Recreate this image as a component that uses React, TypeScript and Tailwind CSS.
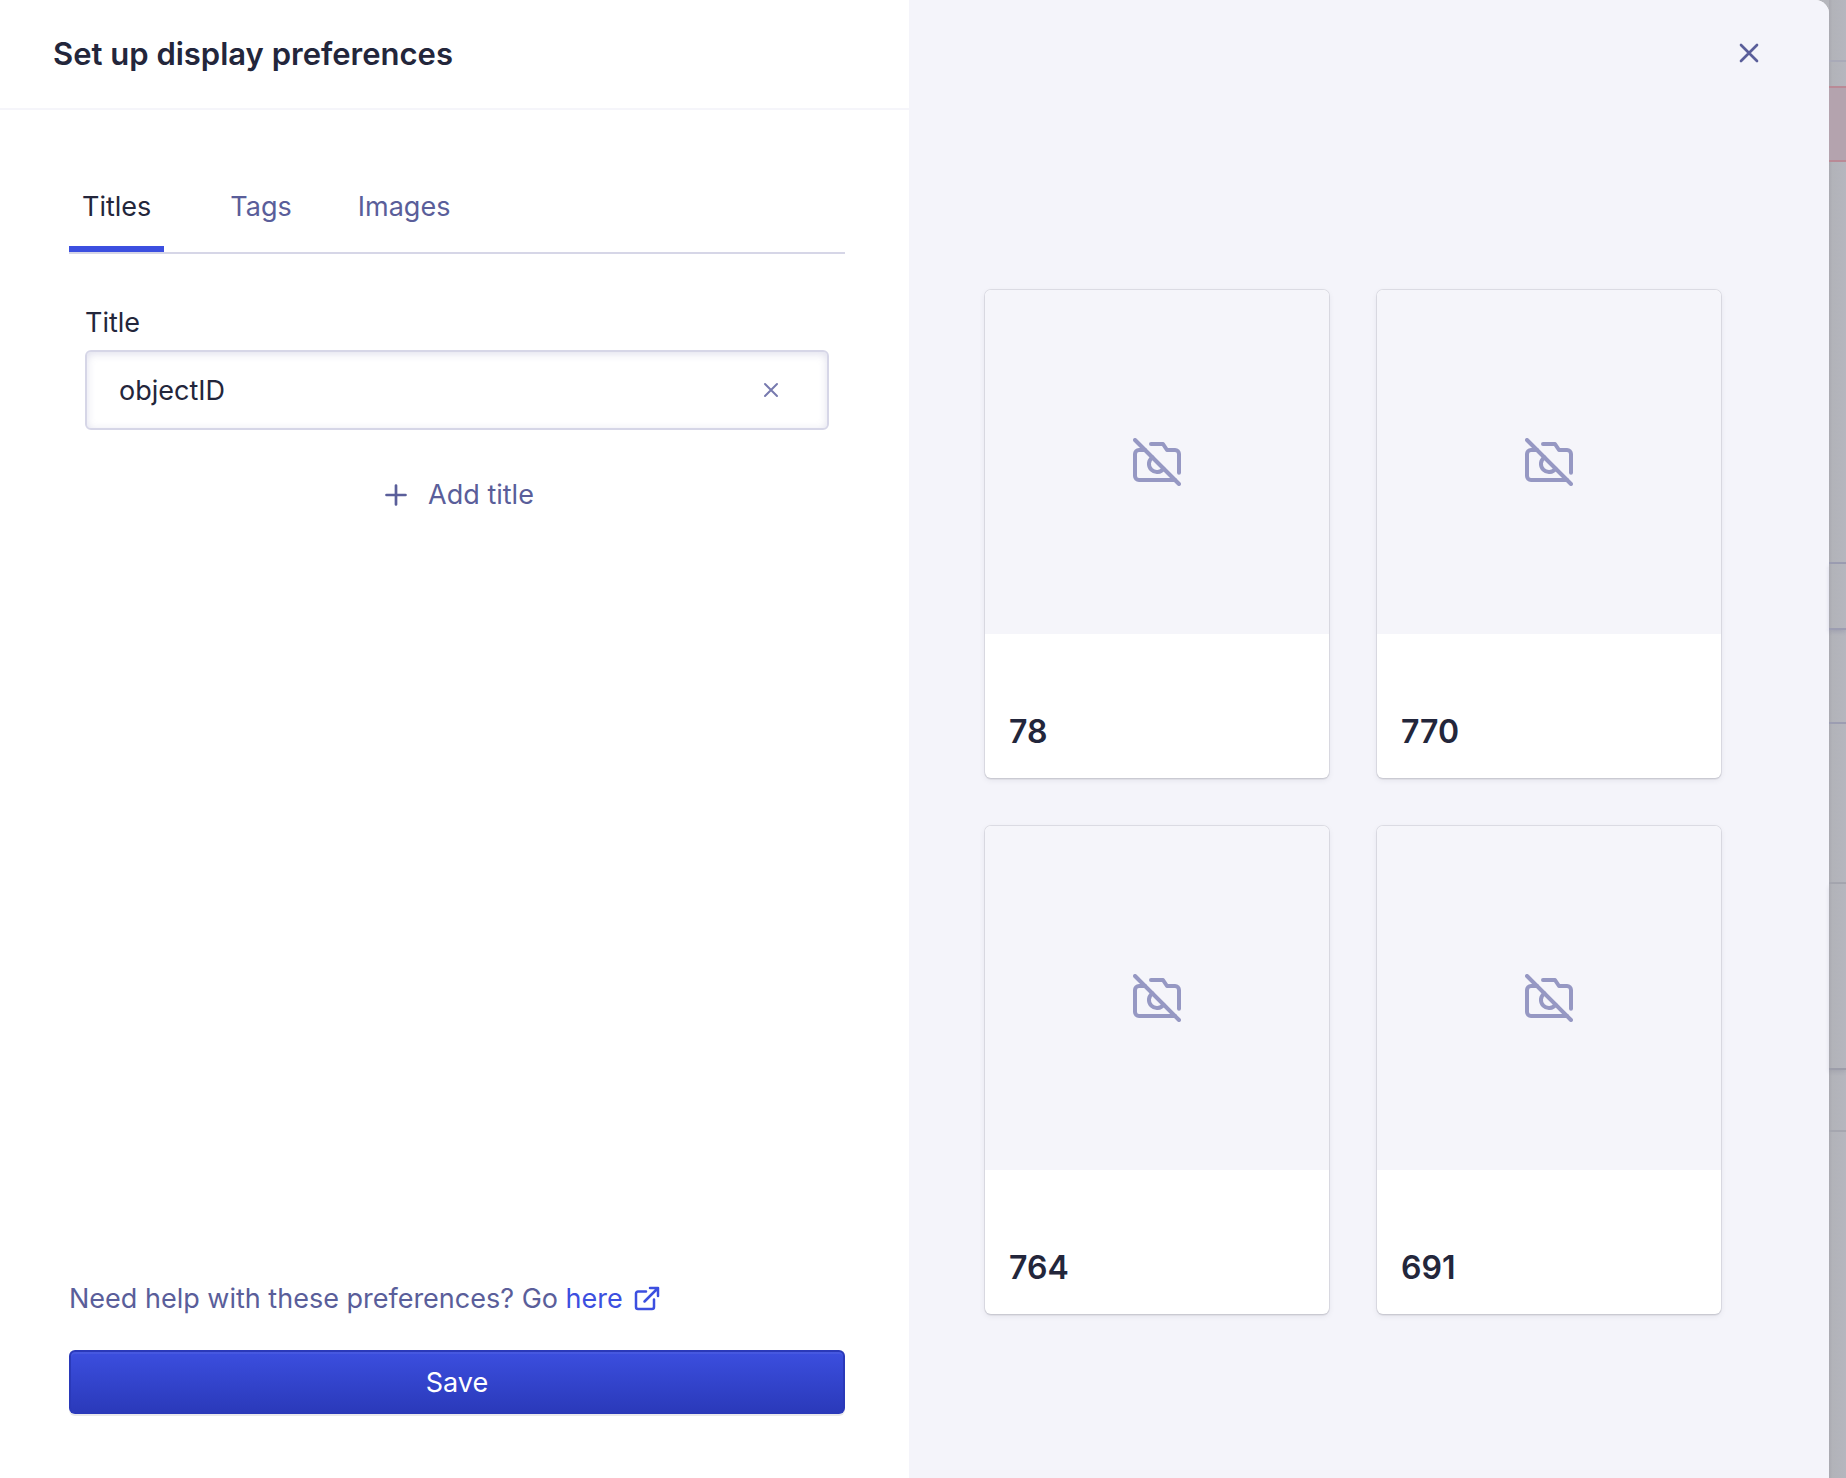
import { useState } from "react";

const RECORDS = ["78", "770", "764", "691"];
const TABS = ["Titles", "Tags", "Images"];

function CameraOff() {
  return (
    <svg className="size-12" viewBox="0 0 24 24" fill="none" stroke="currentColor" strokeWidth="2" strokeLinecap="round" strokeLinejoin="round" aria-hidden="true">
      <line x1="1" y1="1" x2="23" y2="23" />
      <path d="M21 21H3a2 2 0 0 1-2-2V8a2 2 0 0 1 2-2h3m3-3h6l2 3h4a2 2 0 0 1 2 2v9.34m-7.72-2.06a4 4 0 1 1-5.56-5.56" />
    </svg>
  );
}

function Cross({ className }: { className: string }) {
  return (
    <svg className={className} viewBox="0 0 24 24" fill="none" stroke="currentColor" strokeWidth="2" strokeLinecap="round" aria-hidden="true">
      <path d="M18 6 6 18M6 6l12 12" />
    </svg>
  );
}

function Plus() {
  return (
    <svg className="size-8" viewBox="0 0 32 32" fill="none" stroke="currentColor" strokeWidth="2.7" strokeLinecap="round" aria-hidden="true">
      <path d="M16 6.5v19M6.5 16h19" />
    </svg>
  );
}

function ExternalLink() {
  return (
    <svg className="size-7" viewBox="0 0 28 28" fill="none" stroke="currentColor" strokeWidth="2.5" strokeLinecap="round" strokeLinejoin="round" aria-hidden="true">
      <path d="M21 14.5V22a2 2 0 0 1-2 2H5a2 2 0 0 1-2-2V8.5a2 2 0 0 1 2-2h8M17 3h8v8M11.5 16.5 25 3" />
    </svg>
  );
}

function RecordCard({ title }: { title: string }) {
  return (
    <article className="overflow-hidden rounded-md bg-white shadow-[0_0_0_1px_rgba(35,38,59,0.1),0_2px_1px_rgba(35,38,59,0.06),0_2px_6px_rgba(35,38,59,0.08)]">
      <div className="flex aspect-square items-center justify-center bg-[#f5f5fa] text-[#9698c3]">
        <CameraOff />
      </div>
      <h2 className="px-6 pt-[78px] pb-[26px] text-[32px] leading-10 font-semibold">{title}</h2>
    </article>
  );
}

function PageBehind() {
  return (
    <div className="flex w-[17px] shrink-0 flex-col bg-linear-to-r from-[#a9a9b0] via-[#b2b3b9] via-20% to-[#b5b6be]" aria-hidden="true">
      <div className="h-[62px] border-b-2 border-[#a9aab8]" />
      <div className="h-6" />
      <div className="h-[76px] border-y-2 border-[#b98a96] bg-[#b4a3ae]" />
      <div className="h-[402px] border-b-2 border-[#9c9db1]" />
      <div className="h-[66px] border-b-2 border-[#9c9db1] shadow-[0_2px_4px_rgba(60,60,120,0.15)]" />
      <div className="h-[94px] border-b-2 border-[#9c9db1]" />
      <div className="h-40 border-b-2 border-[#a5a6af]" />
      <div className="h-[186px] border-b-2 border-[#9c9da9] shadow-[0_2px_4px_rgba(60,60,90,0.12)]" />
      <div className="h-[62px] border-b-2 border-[#a5a6af]" />
    </div>
  );
}

export default function App() {
  const [tab, setTab] = useState("Titles");
  const [title, setTitle] = useState("objectID");

  return (
    <div className="flex min-h-screen bg-[#b5b6bc] font-[Inter,sans-serif] text-[27px] leading-9 text-[#23263b]">
      <main className="grid min-w-0 flex-1 grid-cols-[909fr_920fr] overflow-hidden rounded-tr-[14px] bg-white">
        <section className="flex flex-col">
          <header className="border-b-2 border-[#f5f5fa] px-[53px] py-[34px]">
            <h1 className="text-[31px] leading-10 font-semibold">Set up display preferences</h1>
          </header>

          <div className="flex flex-1 flex-col px-16 pt-[68px] pb-16 pl-[69px]">
            <div role="tablist" className="flex border-b-2 border-[#d6d6e7]">
              {TABS.map((name) => (
                <button
                  key={name}
                  type="button"
                  role="tab"
                  aria-selected={tab === name}
                  onClick={() => setTab(name)}
                  className="mr-10 border-b-[6px] border-transparent px-[13px] pt-[11px] pb-[21px] text-[#5a5e9a] first:mr-[53px] aria-selected:border-[#3c4fe0] aria-selected:text-[#23263b]"
                >
                  {name}
                </button>
              ))}
            </div>

            <div className="flex flex-col px-4 pt-[51px]">
              <label htmlFor="title-field">Title</label>
              <div className="mt-[9px] flex h-20 items-center rounded-md border-2 border-[#d6d6e7] bg-white pr-[44px] pl-8 shadow-[inset_0_2px_8px_rgba(93,96,160,0.2)]">
                <input id="title-field" value={title} onChange={(e) => setTitle(e.target.value)} className="min-w-0 flex-1 bg-transparent pt-[2px] outline-none" />
                <button type="button" aria-label="Clear title" onClick={() => setTitle("")} className="text-[#777aaf]">
                  <Cross className="size-6" />
                </button>
              </div>
              <button type="button" className="mt-[47px] flex items-center gap-4 self-center text-[#5a5e9a]">
                <Plus />
                Add title
              </button>
            </div>

            <p className="mt-auto flex items-center text-[#5a5e9a]">
              <span className="whitespace-pre">Need help with these preferences? Go </span>
              <a href="#help" className="flex items-center gap-[10px] text-[#3c4fe0]">
                here
                <ExternalLink />
              </a>
            </p>
            <button
              type="button"
              className="mt-[33px] h-16 rounded-md border-2 border-[#2a39b9] border-b-transparent bg-linear-to-b from-[#3c4fe0] to-[#2a39b9] bg-origin-border pt-[2px] text-white shadow-[0_2px_0_rgba(35,38,59,0.1),inset_0_2px_0_rgba(255,255,255,0.06)]"
            >
              Save
            </button>
          </div>
        </section>

        <section className="flex flex-col bg-[#f4f4fa]">
          <button type="button" aria-label="Close" className="mt-[37px] mr-16 self-end text-[#5a5e9a]">
            <Cross className="size-8" />
          </button>
          <div className="grid grid-cols-2 gap-12 pt-[221px] pr-[108px] pb-16 pl-[76px]">
            {RECORDS.map((record) => (
              <RecordCard key={record} title={record} />
            ))}
          </div>
        </section>
      </main>
      <PageBehind />
    </div>
  );
}
